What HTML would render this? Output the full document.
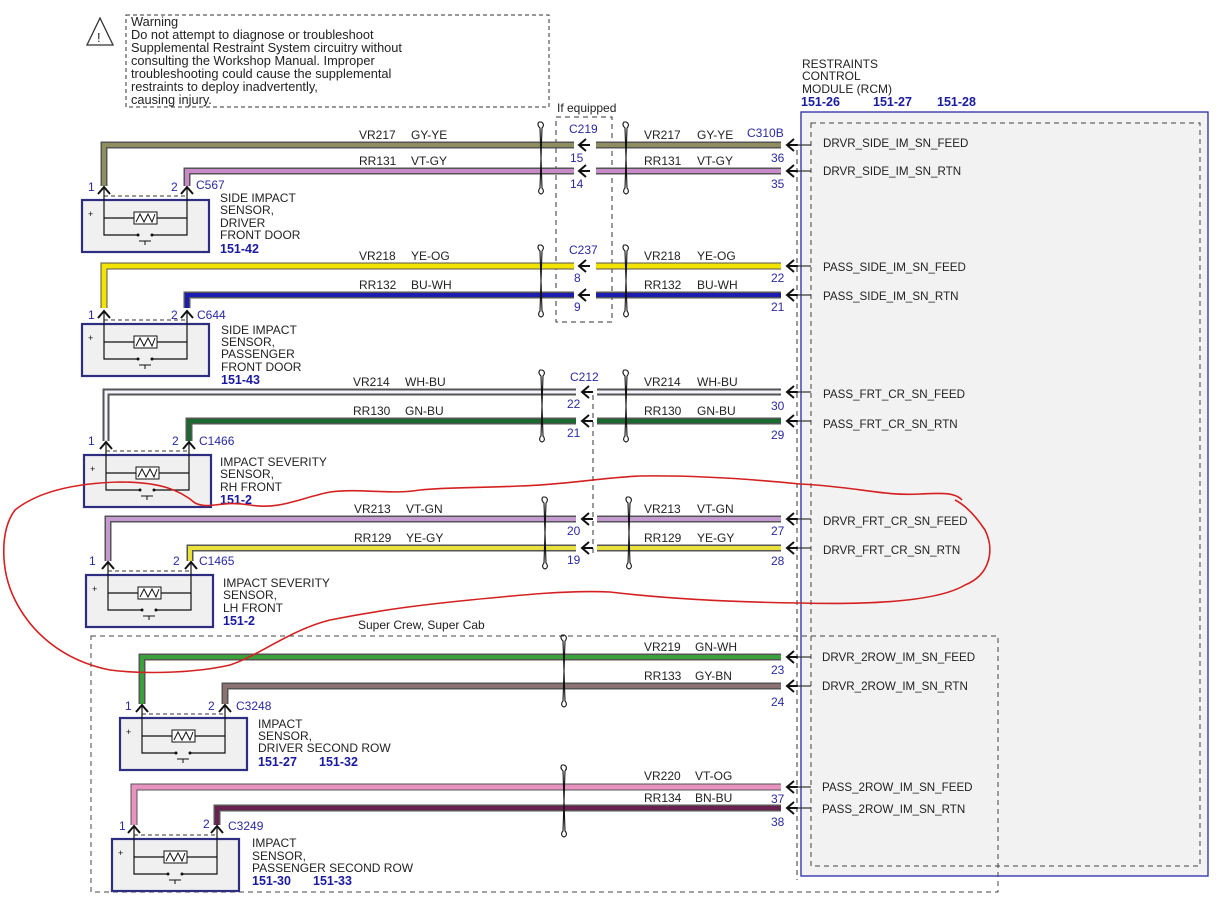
<!DOCTYPE html>
<html><head><meta charset="utf-8"><style>
html,body{margin:0;padding:0;background:#fff;}
svg{display:block;font-family:"Liberation Sans",sans-serif;}
.t{font-size:12px;fill:#222;}
.w{font-size:12.8px;fill:#222;}
.b{font-size:12.5px;fill:#1a1aa0;font-weight:bold;}
.n{font-size:12px;fill:#2a2aa0;}
.s{font-size:11.6px;fill:#222;}
</style></head><body>
<svg width="1226" height="910" viewBox="0 0 1226 910" xmlns="http://www.w3.org/2000/svg">
<defs>
<g id="sen">
 <rect x="0" y="0" width="127" height="52" fill="#f0f0f0" stroke="#2e2e80" stroke-width="2.2"/>
 <line x1="22" y1="-4" x2="105" y2="-4" stroke="#333" stroke-dasharray="4,3"/>
 <path d="M22 -14 V35 H56 M70 35 H105 V-14 M22 18 H52 M75 18 H105" fill="none" stroke="#111" stroke-width="1.2"/>
 <rect x="52" y="12" width="23" height="12" fill="#fff" stroke="#111"/>
 <path d="M54 22 L58 14 L62 22 L66 14 L70 22 L73 14" fill="none" stroke="#111"/>
 <circle cx="56" cy="35" r="1.5" fill="#111"/><circle cx="70" cy="35" r="1.5" fill="#111"/>
 <path d="M57 41 H69 M63 41 V45" stroke="#111" fill="none"/>
 <text x="6" y="17" font-size="9" fill="#111">+</text>
 <path d="M16 -6 L22 -13 L28 -6 M99 -6 L105 -13 L111 -6" fill="none" stroke="#111" stroke-width="2"/>
</g>
<g id="la"><path d="M8 -6 L1 0 L8 6 M1 0 H12" fill="none" stroke="#111" stroke-width="2"/></g>
<g id="tw"><path d="M-2 -36 C-4 -34 -3 -32 -1 -30 L1 30 C3 32 3 35 0 36 C-3 35 -3 32 -1 30 L1 -30 C3 -32 3 -35 0 -36 Z" fill="none" stroke="#111" stroke-width="1.1"/></g>
</defs>

<!-- warning -->
<rect x="126" y="15" width="423" height="92" fill="none" stroke="#333" stroke-dasharray="4,3"/>
<path d="M100 18 L87 45 H113 Z" fill="#fff" stroke="#333" stroke-width="1.3"/>
<text x="97" y="42" font-size="13" fill="#222">!</text>
<text class="w" x="131" y="26">Warning</text>
<text class="w" x="131" y="39">Do not attempt to diagnose or troubleshoot</text>
<text class="w" x="131" y="52">Supplemental Restraint System circuitry without</text>
<text class="w" x="131" y="65">consulting the Workshop Manual. Improper</text>
<text class="w" x="131" y="78">troubleshooting could cause the supplemental</text>
<text class="w" x="131" y="91">restraints to deploy inadvertently,</text>
<text class="w" x="131" y="104">causing injury.</text>

<!-- RCM -->
<text class="t" x="802" y="68">RESTRAINTS</text>
<text class="t" x="802" y="80">CONTROL</text>
<text class="t" x="802" y="93">MODULE (RCM)</text>
<text class="b" x="801" y="106">151-26</text>
<text class="b" x="873" y="106">151-27</text>
<text class="b" x="937" y="106">151-28</text>
<rect x="801" y="112" width="407" height="764" fill="#f2f2f2" stroke="#2a2aa8" stroke-width="1.3"/>
<rect x="811" y="123" width="389" height="743" fill="none" stroke="#444" stroke-dasharray="5,4"/>
<line x1="797" y1="150" x2="797" y2="880" stroke="#333" stroke-dasharray="5,4"/>

<!-- connector boxes -->
<text class="t" x="557" y="112">If equipped</text>
<rect x="556" y="117" width="56" height="205" fill="none" stroke="#333" stroke-dasharray="5,4"/>
<line x1="593" y1="395" x2="593" y2="553" stroke="#333" stroke-dasharray="5,4"/>
<rect x="91" y="636" width="907" height="256" fill="none" stroke="#444" stroke-dasharray="5,4"/>
<text class="t" x="358" y="629">Super Crew, Super Cab</text>
<text class="n" x="569" y="133">C219</text>
<text class="n" x="569" y="254">C237</text>
<text class="n" x="570" y="381">C212</text>
<text class="n" x="747" y="137">C310B</text>

<!-- wires -->
<g fill="none" stroke-linejoin="miter">
<g stroke="#555" stroke-width="7">
 <path d="M104 186 V145 H574 M596 145 H781"/>
 <path d="M187 186 V171 H574 M596 171 H781"/>
 <path d="M104 308 V266 H574 M596 266 H781"/>
 <path d="M187 308 V295 H574 M596 295 H781"/>
 <path d="M106 441 V392 H576 M597 392 H781"/>
 <path d="M189 441 V421 H576 M597 421 H781"/>
 <path d="M108 561 V519 H576 M597 519 H781"/>
 <path d="M190 561 V548 H576 M597 548 H781"/>
 <path d="M142 704 V657 H781"/>
 <path d="M225 704 V686 H781"/>
 <path d="M134 825 V787 H781"/>
 <path d="M217 825 V808 H781"/>
</g>
<path d="M104 186 V145 H574 M596 145 H781" stroke="#8d8d5e" stroke-width="4"/>
<path d="M187 186 V171 H574 M596 171 H781" stroke="#c98ac9" stroke-width="4"/>
<path d="M104 308 V266 H574 M596 266 H781" stroke="#f2e400" stroke-width="5"/>
<path d="M187 308 V295 H574 M596 295 H781" stroke="#1c1cb0" stroke-width="4"/>
<path d="M106 441 V392 H576 M597 392 H781" stroke="#f4f4fc" stroke-width="3"/>
<path d="M189 441 V421 H576 M597 421 H781" stroke="#1a6a30" stroke-width="4"/>
<path d="M108 561 V519 H576 M597 519 H781" stroke="#c49ad0" stroke-width="4"/>
<path d="M190 561 V548 H576 M597 548 H781" stroke="#e8e23a" stroke-width="4"/>
<path d="M142 704 V657 H781" stroke="#3aa03a" stroke-width="4"/>
<path d="M225 704 V686 H781" stroke="#8a7272" stroke-width="4"/>
<path d="M134 825 V787 H781" stroke="#e892c0" stroke-width="5"/>
<path d="M217 825 V808 H781" stroke="#6a2050" stroke-width="4"/>
</g>

<!-- arrows -->
<use href="#la" x="578" y="145"/><use href="#la" x="578" y="171"/>
<use href="#la" x="578" y="266"/><use href="#la" x="578" y="295"/>
<use href="#la" x="581" y="392"/><use href="#la" x="581" y="421"/>
<use href="#la" x="581" y="519"/><use href="#la" x="581" y="548"/>
<use href="#la" x="786" y="145"/><use href="#la" x="786" y="171"/>
<use href="#la" x="786" y="266"/><use href="#la" x="786" y="295"/>
<use href="#la" x="786" y="392"/><use href="#la" x="786" y="421"/>
<use href="#la" x="786" y="519"/><use href="#la" x="786" y="548"/>
<use href="#la" x="786" y="657"/><use href="#la" x="786" y="686"/>
<use href="#la" x="786" y="787"/><use href="#la" x="786" y="808"/>
<g stroke="#333" stroke-width="1.2">
<line x1="797" y1="145" x2="811" y2="145"/><line x1="797" y1="171" x2="811" y2="171"/>
<line x1="797" y1="266" x2="811" y2="266"/><line x1="797" y1="295" x2="811" y2="295"/>
<line x1="797" y1="392" x2="811" y2="392"/><line x1="797" y1="421" x2="811" y2="421"/>
<line x1="797" y1="519" x2="811" y2="519"/><line x1="797" y1="548" x2="811" y2="548"/>
<line x1="797" y1="657" x2="811" y2="657"/><line x1="797" y1="686" x2="811" y2="686"/>
<line x1="797" y1="787" x2="811" y2="787"/><line x1="797" y1="808" x2="811" y2="808"/>
</g>

<!-- twists -->
<use href="#tw" x="541" y="158"/><use href="#tw" x="626" y="158"/>
<use href="#tw" x="541" y="281"/><use href="#tw" x="626" y="281"/>
<use href="#tw" x="542" y="406"/><use href="#tw" x="626" y="406"/>
<use href="#tw" x="545" y="533"/><use href="#tw" x="629" y="533"/>
<use href="#tw" x="564" y="671"/><use href="#tw" x="564" y="801"/>

<!-- wire labels -->
<text class="t" x="359" y="139">VR217</text><text class="t" x="411" y="139">GY-YE</text>
<text class="t" x="359" y="165">RR131</text><text class="t" x="411" y="165">VT-GY</text>
<text class="t" x="359" y="260">VR218</text><text class="t" x="411" y="260">YE-OG</text>
<text class="t" x="359" y="289">RR132</text><text class="t" x="411" y="289">BU-WH</text>
<text class="t" x="353" y="386">VR214</text><text class="t" x="405" y="386">WH-BU</text>
<text class="t" x="353" y="415">RR130</text><text class="t" x="405" y="415">GN-BU</text>
<text class="t" x="354" y="513">VR213</text><text class="t" x="406" y="513">VT-GN</text>
<text class="t" x="354" y="542">RR129</text><text class="t" x="406" y="542">YE-GY</text>
<text class="t" x="644" y="139">VR217</text><text class="t" x="697" y="139">GY-YE</text>
<text class="t" x="644" y="165">RR131</text><text class="t" x="697" y="165">VT-GY</text>
<text class="t" x="644" y="260">VR218</text><text class="t" x="697" y="260">YE-OG</text>
<text class="t" x="644" y="289">RR132</text><text class="t" x="697" y="289">BU-WH</text>
<text class="t" x="644" y="386">VR214</text><text class="t" x="697" y="386">WH-BU</text>
<text class="t" x="644" y="415">RR130</text><text class="t" x="697" y="415">GN-BU</text>
<text class="t" x="644" y="513">VR213</text><text class="t" x="697" y="513">VT-GN</text>
<text class="t" x="644" y="542">RR129</text><text class="t" x="697" y="542">YE-GY</text>
<text class="t" x="644" y="651">VR219</text><text class="t" x="695" y="651">GN-WH</text>
<text class="t" x="644" y="680">RR133</text><text class="t" x="695" y="680">GY-BN</text>
<text class="t" x="644" y="780">VR220</text><text class="t" x="695" y="780">VT-OG</text>
<text class="t" x="644" y="802">RR134</text><text class="t" x="695" y="802">BN-BU</text>

<!-- pin numbers -->
<text class="n" x="570" y="162">15</text><text class="n" x="570" y="188">14</text>
<text class="n" x="574" y="282">8</text><text class="n" x="574" y="311">9</text>
<text class="n" x="567" y="408">22</text><text class="n" x="567" y="437">21</text>
<text class="n" x="567" y="535">20</text><text class="n" x="567" y="564">19</text>
<text class="n" x="771" y="162">36</text><text class="n" x="771" y="188">35</text>
<text class="n" x="771" y="282">22</text><text class="n" x="771" y="311">21</text>
<text class="n" x="771" y="410">30</text><text class="n" x="771" y="439">29</text>
<text class="n" x="771" y="535">27</text><text class="n" x="771" y="565">28</text>
<text class="n" x="771" y="674">23</text><text class="n" x="771" y="706">24</text>
<text class="n" x="771" y="803">37</text><text class="n" x="771" y="826">38</text>

<!-- signal names -->
<text class="s" x="823" y="147">DRVR_SIDE_IM_SN_FEED</text>
<text class="s" x="823" y="175">DRVR_SIDE_IM_SN_RTN</text>
<text class="s" x="823" y="271">PASS_SIDE_IM_SN_FEED</text>
<text class="s" x="823" y="300">PASS_SIDE_IM_SN_RTN</text>
<text class="s" x="823" y="398">PASS_FRT_CR_SN_FEED</text>
<text class="s" x="823" y="428">PASS_FRT_CR_SN_RTN</text>
<text class="s" x="823" y="525">DRVR_FRT_CR_SN_FEED</text>
<text class="s" x="823" y="554">DRVR_FRT_CR_SN_RTN</text>
<text class="s" x="822" y="661">DRVR_2ROW_IM_SN_FEED</text>
<text class="s" x="822" y="690">DRVR_2ROW_IM_SN_RTN</text>
<text class="s" x="822" y="791">PASS_2ROW_IM_SN_FEED</text>
<text class="s" x="822" y="813">PASS_2ROW_IM_SN_RTN</text>

<!-- sensors -->
<use href="#sen" x="82" y="200"/>
<text class="n" x="88" y="191">1</text><text class="n" x="171" y="191">2</text><text class="n" x="196" y="189">C567</text>
<text class="t" x="220" y="202">SIDE IMPACT</text><text class="t" x="220" y="214">SENSOR,</text><text class="t" x="220" y="227">DRIVER</text><text class="t" x="220" y="239">FRONT DOOR</text>
<text class="b" x="220" y="253">151-42</text>

<use href="#sen" x="82" y="324"/>
<text class="n" x="88" y="319">1</text><text class="n" x="171" y="319">2</text><text class="n" x="197" y="319">C644</text>
<text class="t" x="221" y="334">SIDE IMPACT</text><text class="t" x="221" y="346">SENSOR,</text><text class="t" x="221" y="358">PASSENGER</text><text class="t" x="221" y="371">FRONT DOOR</text>
<text class="b" x="221" y="384">151-43</text>

<use href="#sen" x="84" y="455"/>
<text class="n" x="88" y="445">1</text><text class="n" x="172" y="445">2</text><text class="n" x="199" y="445">C1466</text>
<text class="t" x="220" y="466">IMPACT SEVERITY</text><text class="t" x="220" y="478">SENSOR,</text><text class="t" x="220" y="491">RH FRONT</text>
<text class="b" x="220" y="504">151-2</text>

<use href="#sen" x="86" y="575"/>
<text class="n" x="89" y="565">1</text><text class="n" x="173" y="565">2</text><text class="n" x="199" y="565">C1465</text>
<text class="t" x="223" y="587">IMPACT SEVERITY</text><text class="t" x="223" y="599">SENSOR,</text><text class="t" x="223" y="612">LH FRONT</text>
<text class="b" x="223" y="625">151-2</text>

<use href="#sen" x="120" y="718"/>
<text class="n" x="125" y="710">1</text><text class="n" x="208" y="710">2</text><text class="n" x="236" y="710">C3248</text>
<text class="t" x="258" y="728">IMPACT</text><text class="t" x="258" y="740">SENSOR,</text><text class="t" x="258" y="752">DRIVER SECOND ROW</text>
<text class="b" x="258" y="766">151-27</text><text class="b" x="319" y="766">151-32</text>

<use href="#sen" x="112" y="839"/>
<text class="n" x="119" y="830">1</text><text class="n" x="203" y="828">2</text><text class="n" x="228" y="830">C3249</text>
<text class="t" x="252" y="847">IMPACT</text><text class="t" x="252" y="860">SENSOR,</text><text class="t" x="252" y="872">PASSENGER SECOND ROW</text>
<text class="b" x="252" y="885">151-30</text><text class="b" x="313" y="885">151-33</text>

<!-- red loop -->
<path d="M962 500 C955 492 940 493 920 494 C880 496 860 487 800 484 C760 480 700 475 640 476 C600 478 560 485 520 486 C480 488 450 487 420 490 C390 495 360 488 330 492 C300 498 280 510 250 505 C220 500 210 510 195 503 C180 490 160 482 120 482 C80 483 40 490 15 510 C0 530 0 570 15 600 C30 630 60 660 110 670 C150 675 200 672 230 665 C260 655 290 630 330 620 C380 610 420 605 470 600 C520 595 570 590 610 592 C660 598 720 602 800 603 C880 605 940 600 965 585 C990 575 995 550 985 530 C975 515 965 505 955 500" fill="none" stroke="#d42020" stroke-width="1.6"/>
</svg>
</body></html>
